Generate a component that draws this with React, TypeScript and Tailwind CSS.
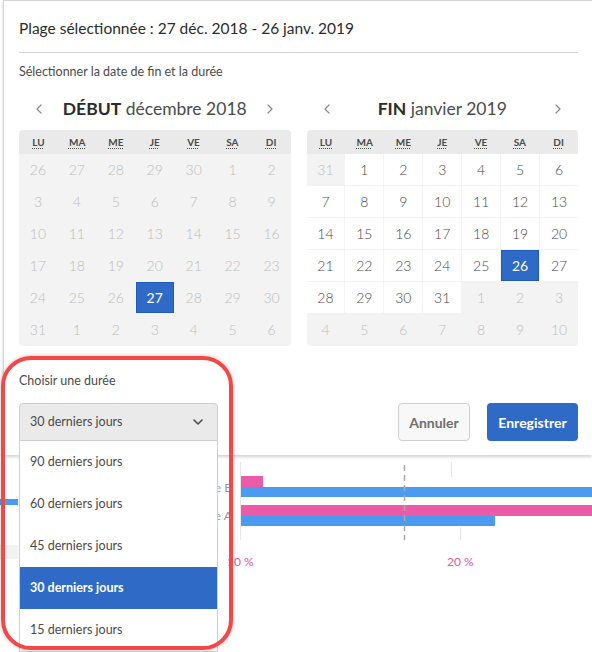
const DAYS = ["LU", "MA", "ME", "JE", "VE", "SA", "DI"];

type Cell = { n: number; inMonth: boolean; selected?: boolean };

function build(first: number[], count: number, after: number, selected: number, allOut: boolean): Cell[] {
  const cells: Cell[] = first.map((n) => ({ n, inMonth: false }));
  for (let d = 1; d <= count; d++) {
    cells.push({ n: d, inMonth: !allOut, selected: d === selected });
  }
  for (let d = 1; d <= after; d++) cells.push({ n: d, inMonth: false });
  return cells;
}

// décembre 2018 (all disabled, 27 selected) and janvier 2019 (26 selected)
const DEC = build([26, 27, 28, 29, 30], 31, 6, 27, true);
const JAN = build([31], 31, 10, 26, false);

const DURATIONS = ["90 derniers jours", "60 derniers jours", "45 derniers jours", "30 derniers jours", "15 derniers jours"];

function Chevron({ dir }: { dir: "left" | "right" | "down" }) {
  const d = dir === "left" ? "M6 1 L2 5 L6 9" : dir === "right" ? "M2 1 L6 5 L2 9" : "M1 2 L5 6 L9 2";
  return (
    <svg width={dir === "down" ? 10 : 8} height={dir === "down" ? 8 : 10} viewBox={dir === "down" ? "0 0 10 8" : "0 0 8 10"} fill="none">
      <path d={d} stroke={dir === "down" ? "#4b4b4b" : "#8a8a8a"} strokeWidth={dir === "down" ? 1.6 : 1.2} strokeLinecap="round" strokeLinejoin="round" />
    </svg>
  );
}

function Calendar({ label, month, cells }: { label: string; month: string; cells: Cell[] }) {
  return (
    <div className="w-[272px]">
      <div className="flex h-[26px] items-center justify-between px-[16px]">
        <Chevron dir="left" />
        <div className="text-[17.5px] leading-[26px] text-[#4b4b4b]">
          <span className="font-bold text-[#2c2c2c]">{label}</span> {month}
        </div>
        <Chevron dir="right" />
      </div>
      <div className="mt-[8px] overflow-hidden rounded-[4px] bg-[#f3f3f3]">
        <div className="grid h-[24px] grid-cols-7 bg-[#eaeaea]">
          {DAYS.map((d) => (
            <div key={d} className="flex items-center justify-center">
              <span className="text-[10px] font-bold text-[#4b4b4b] underline decoration-dotted underline-offset-2">{d}</span>
            </div>
          ))}
        </div>
        <div className="grid grid-cols-7 gap-px pb-px">
          {cells.map((c, i) => (
            <div
              key={i}
              className={
                "flex h-[31px] items-center justify-center text-[14px] font-light " +
                (c.selected
                  ? "border border-[#1e5bb8] bg-[#2f6bc6] font-normal text-white"
                  : c.inMonth
                    ? "bg-white text-[#4b4b4b]"
                    : "text-[#bcbcbc]")
              }
            >
              {c.n}
            </div>
          ))}
        </div>
      </div>
    </div>
  );
}

function ChartBackdrop() {
  return (
    <svg width="592" height="197" viewBox="0 0 592 197" className="block">
      <rect x="0" y="44" width="18" height="6" fill="#4b9cf0" />
      <rect x="0" y="90" width="18" height="14" fill="#f2f2f2" />
      <line x1="240.5" y1="7" x2="240.5" y2="85" stroke="#e6e6e6" />
      <line x1="451.5" y1="7" x2="451.5" y2="22" stroke="#e6e6e6" />
      <line x1="460.5" y1="72" x2="460.5" y2="85" stroke="#e6e6e6" />
      <rect x="241" y="21" width="22" height="11" fill="#ec5ba7" />
      <rect x="241" y="32" width="351" height="10" fill="#4b9cf0" />
      <rect x="241" y="50" width="351" height="11" fill="#ec5ba7" />
      <rect x="241" y="61" width="254" height="10" fill="#4b9cf0" />
      <line x1="404.5" y1="10" x2="404.5" y2="85" stroke="#a8a8a8" strokeWidth="1.5" strokeDasharray="6 4" />
      <text x="232" y="37" fontSize="12" fill="#9a9a9a" fontFamily="Lato, sans-serif" textAnchor="end">ie B</text>
      <text x="232" y="65" fontSize="12" fill="#9a9a9a" fontFamily="Lato, sans-serif" textAnchor="end">ie A</text>
      <text x="227" y="111" fontSize="12" fill="#e8589f" fontFamily="Lato, sans-serif">10 %</text>
      <text x="447" y="111" fontSize="12" fill="#e8589f" fontFamily="Lato, sans-serif">20 %</text>
    </svg>
  );
}

export default function App() {
  return (
    <div className="relative h-[652px] w-[592px] overflow-hidden bg-white" style={{ fontFamily: "Lato, 'Noto Sans', sans-serif" }}>
      {/* page behind the popover */}
      <div className="pt-[455px]">
        <ChartBackdrop />
      </div>

      {/* date range popover */}
      <div className="absolute left-[3px] top-0 h-[455px] w-[589px] border-l border-t border-[#d6d6d6] bg-white pl-[15px] pr-[14px] pt-[17px] shadow-[0_2px_3px_rgba(0,0,0,0.18)]">
        <div className="text-[15.5px] leading-[20px] text-[#2c2c2c]">Plage sélectionnée : 27 déc. 2018 - 26 janv. 2019</div>
        <div className="mt-[14px] h-px bg-[#d3d3d3]" />
        <div className="mt-[11px] text-[12.5px] leading-[16px] text-[#4b4b4b]">Sélectionner la date de fin et la durée</div>

        <div className="mt-[16px] flex gap-[16px]">
          <Calendar label="DÉBUT" month="décembre 2018" cells={DEC} />
          <Calendar label="FIN" month="janvier 2019" cells={JAN} />
        </div>

        <div className="mt-[27px] text-[12.5px] leading-[16px] text-[#4b4b4b]">Choisir une durée</div>
        <div className="mt-[14px] flex items-center">
          <div className="relative w-[199px]">
            <button className="flex h-[38px] w-full items-center justify-between rounded-t-[4px] border border-[#cfcfcf] bg-[#eaeaea] pl-[10px] pr-[14px] text-[12.5px] text-[#4b4b4b]">
              30 derniers jours
              <Chevron dir="down" />
            </button>
            <div className="absolute left-0 top-[38px] w-[199px] border border-t-0 border-[#cfcfcf] bg-white">
              {DURATIONS.map((d, i) => (
                <div
                  key={d}
                  className={
                    "flex h-[42px] items-center pl-[10px] text-[12.5px] " +
                    (i === 3 ? "bg-[#2f6bc6] font-bold text-white" : "text-[#4b4b4b]")
                  }
                >
                  {d}
                </div>
              ))}
            </div>
          </div>
          <div className="ml-auto flex gap-[17px]">
            <button className="h-[38px] w-[72px] rounded-[4px] border border-[#d0d0d0] bg-[#f8f8f8] text-[14px] font-bold text-[#6e6e6e]">Annuler</button>
            <button className="h-[38px] w-[91px] rounded-[4px] bg-[#2f6bc6] text-[14px] font-bold text-white">Enregistrer</button>
          </div>
        </div>
      </div>

      {/* red highlight around the duration picker */}
      <div className="pointer-events-none absolute left-[1px] top-[356px] h-[294px] w-[232px] rounded-[30px] border-[4px] border-[#f44848] shadow-[0_0_4px_rgba(0,0,0,0.25)]" />
    </div>
  );
}
